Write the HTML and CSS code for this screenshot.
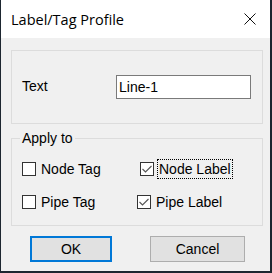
FILE: index.html
```html
<!DOCTYPE html>
<html lang="en">
<head>
    <meta charset="UTF-8">
    <title>Label/Tag Profile</title>
    <link rel="stylesheet" href="styles.css">
</head>
<body>
    <div class="window">
        <div class="titlebar">
            <span class="title">Label/Tag Profile</span>
            <svg class="close" width="12" height="12" viewBox="0 0 12 12">
                <path d="M0.5 0.5 L11.5 11.5 M11.5 0.5 L0.5 11.5" stroke="#111" stroke-width="1" fill="none"/>
            </svg>
        </div>
        <div class="content">
            <div class="group text-group">
                <span class="field-label">Text</span>
                <div class="textbox">Line-1</div>
            </div>
            <fieldset class="group apply-group">
                <legend>Apply to</legend>
                <div class="row">
                    <label class="check col-a"><span class="box"></span><span>Node Tag</span></label>
                    <label class="check"><span class="box checked"><svg width="12" height="12" viewBox="0 0 12 12"><path d="M1.5 6 L4.5 9 L10.5 3" stroke="#555" stroke-width="1.1" fill="none"/></svg></span><span class="focused">Node Label</span></label>
                </div>
                <div class="row">
                    <label class="check col-b"><span class="box"></span><span>Pipe Tag</span></label>
                    <label class="check"><span class="box checked"><svg width="12" height="12" viewBox="0 0 12 12"><path d="M1.5 6 L4.5 9 L10.5 3" stroke="#555" stroke-width="1.1" fill="none"/></svg></span><span>Pipe Label</span></label>
                </div>
            </fieldset>
            <div class="buttons">
                <button class="btn btn-default">OK</button>
                <button class="btn btn-cancel">Cancel</button>
            </div>
        </div>
    </div>
</body>
</html>
```

FILE: styles.css
```css
body {
    margin: 0;
    background: #1d2630;
    font-family: 'Liberation Sans', Arial, sans-serif;
    font-size: 14px;
    color: #000;
}
.window {
    margin-left: 1px;
    width: 269px;
    height: 271px;
    background: #f0f0f0;
    display: flex;
    flex-direction: column;
}
.titlebar {
    height: 38px;
    background: #fff;
    display: flex;
    align-items: center;
    justify-content: space-between;
    padding: 0 14px 0 10px;
}
.title {
    font-family: 'Open Sans', 'Noto Sans', sans-serif;
    font-size: 14.5px;
    color: #000;
}
.close {
    display: block;
}
.content {
    padding: 12px 7px 0 10px;
    display: flex;
    flex-direction: column;
}
.group {
    border: 1px solid #dcdcdc;
}
.text-group {
    height: 72px;
    display: flex;
    align-items: center;
    padding: 0 11px 0 10px;
    justify-content: space-between;
}
.field-label {
    margin-bottom: 2px;
}
.textbox {
    width: 131px;
    height: 22px;
    border: 1px solid #7a7a7a;
    background: #fff;
    line-height: 22px;
    padding-left: 2px;
}
.apply-group {
    margin: 5px 0 0 0;
    padding: 5px 0 0 10px;
    height: 97px;
    box-sizing: border-box;
    min-width: 0;
}
.apply-group legend {
    padding: 0 2px;
    margin-left: -2px;
    line-height: 18px;
}
.row {
    display: flex;
    align-items: center;
    height: 33px;
}
.check {
    display: flex;
    align-items: center;
    gap: 5px;
}
.col-a {
    width: 118px;
}
.col-b {
    width: 115px;
}
.box {
    width: 12px;
    height: 12px;
    border: 1px solid #333;
    background: #fff;
    display: flex;
    align-items: center;
    justify-content: center;
}
.focused {
    outline: 1px dotted #000;
    outline-offset: 1px;
}
.buttons {
    display: flex;
    padding: 10px 0 0 19px;
}
.btn {
    font-family: 'Liberation Sans', Arial, sans-serif;
    font-size: 14px;
    color: #000;
    background: #e1e1e1;
    height: 26px;
    padding: 0;
}
.btn-default {
    width: 82px;
    border: 2px solid #0078d7;
}
.btn-cancel {
    width: 95px;
    border: 1px solid #adadad;
    margin-left: 38px;
}
```
